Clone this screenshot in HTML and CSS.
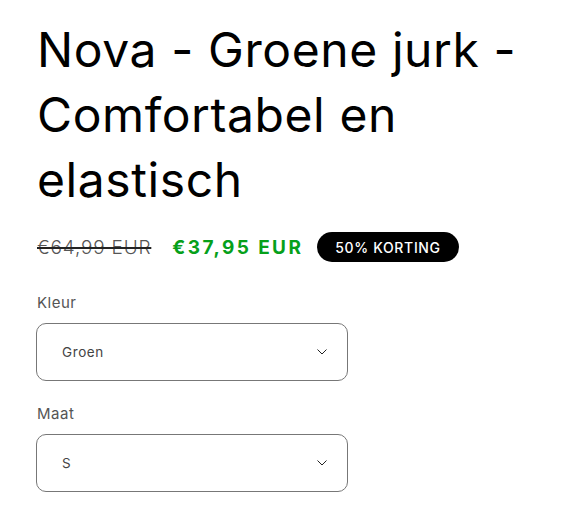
FILE: index.html
```html
<!DOCTYPE html>
<html lang="nl"><head><meta charset="utf-8"><link rel="stylesheet" href="styles.css"></head>
<body>
<div class="product">
  <h1 class="title">Nova - Groene jurk - Comfortabel en elastisch</h1>
  <div class="price-row">
    <s class="price-old">€64,99 EUR</s>
    <span class="price-new">€37,95 EUR</span>
    <span class="badge">50% KORTING</span>
  </div>
  <div class="field">
    <div class="label">Kleur</div>
    <div class="select"><span class="value">Groen</span>
      <svg class="chev" width="10" height="6" viewBox="0 0 10 6"><path d="M0.5 0.5 L5 5 L9.5 0.5" fill="none" stroke="#222" stroke-width="1"/></svg>
    </div>
  </div>
  <div class="field">
    <div class="label">Maat</div>
    <div class="select"><span class="value">S</span>
      <svg class="chev" width="10" height="6" viewBox="0 0 10 6"><path d="M0.5 0.5 L5 5 L9.5 0.5" fill="none" stroke="#222" stroke-width="1"/></svg>
    </div>
  </div>
</div>
</body></html>
```
FILE: styles.css
```css
html,body{margin:0;padding:0;background:#fff}
body{font-family:"Inter","Noto Sans",sans-serif;color:#121212}
.product{padding:17px 0 0 36px;width:500px}
.title{margin:0;font-size:48px;line-height:65px;font-weight:400;letter-spacing:0.6px;color:#000;padding-left:1px}
.price-row{display:flex;align-items:center;margin-top:20px;padding-left:1px}
.price-old{font-size:19px;font-weight:300;color:#555;letter-spacing:0.8px;text-decoration-color:#222;text-decoration-thickness:1.5px}
.price-new{margin-left:21px;font-size:19px;font-weight:700;color:#06a01a;letter-spacing:2.4px}
.badge{margin-left:14px;height:30px;box-sizing:border-box;padding:0 18px;border-radius:15px;background:#000;color:#fff;font-size:14px;font-weight:500;letter-spacing:0.65px;display:flex;align-items:center}
.field{margin-top:31px}
.field+.field{margin-top:23px}
.label{font-size:15px;line-height:20px;color:#555;letter-spacing:0.5px;padding-left:1px;margin-bottom:10px}
.select{width:312px;height:58px;box-sizing:border-box;border:1px solid #777;border-radius:10px;display:flex;align-items:center;justify-content:space-between;padding:0 20px 0 25px}
.value{font-size:13.5px;color:#444;letter-spacing:0.6px}
.chev{display:block}
```
